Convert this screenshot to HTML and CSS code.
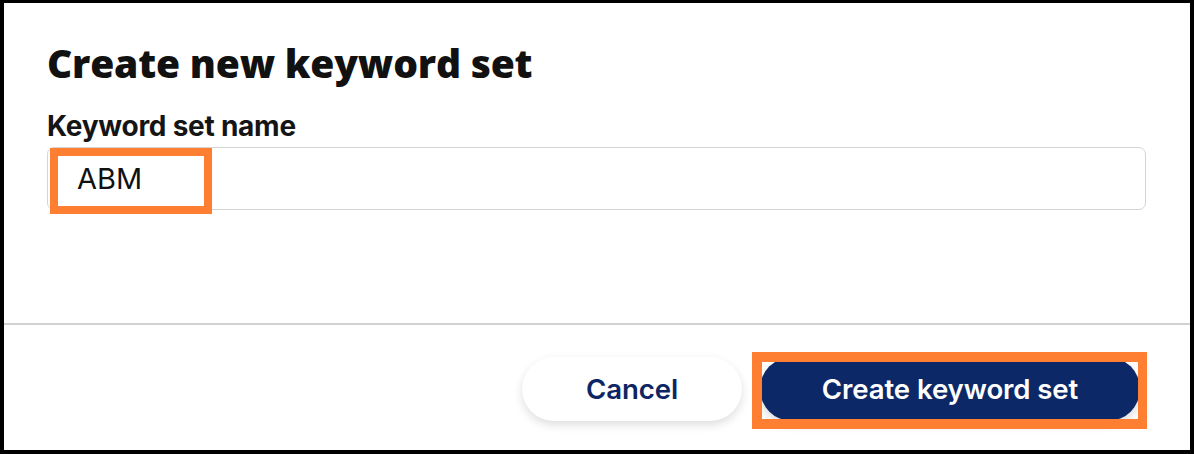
FILE: index.html
```html
<!DOCTYPE html>
<html lang="en">
<head>
<meta charset="UTF-8" />
<meta name="viewport" content="width=device-width, initial-scale=1" />
<title>Create new keyword set</title>
<link rel="stylesheet" href="styles.css">
</head>
<body>

  <div class="modal" role="dialog" aria-labelledby="modalTitle">
    <div class="modal-body">
      <h2 class="modal-title" id="modalTitle">Create new keyword set</h2>
      <label class="field-label" for="setName">Keyword set name</label>
      <div class="field">
        <input type="text" id="setName" class="field-input" value="ABM" />
        <!-- cadre orange d'annotation -->
        <span class="mark mark-input"></span>
      </div>
    </div>

    <div class="modal-footer">
      <button class="btn btn-secondary">Cancel</button>
      <div class="btn-wrap">
        <button class="btn btn-primary">Create keyword set</button>
        <span class="mark mark-btn"></span>
      </div>
    </div>
  </div>

</body>
</html>
```

FILE: styles.css
```css
* {
  box-sizing: border-box;
}

html, body {
  margin: 0;
  height: 100%;
  background: #fff;
}

.modal {
  height: 454px;
  border-style: solid;
  border-color: #000;
  border-width: 3px 4px 4px 4px;
  background: #fff;
  display: flex;
  flex-direction: column;
}

.modal-body {
  height: 320px;
  padding: 36px 44px 0 43px;
}

.modal-title {
  margin: 0;
  font-family: "Open Sans", sans-serif;
  font-weight: 800;
  font-size: 39px;
  line-height: 48px;
  letter-spacing: -0.2px;
  color: #111;
}

.field-label {
  display: block;
  margin-top: 23px;
  font-family: Inter, sans-serif;
  font-weight: 700;
  font-size: 28px;
  line-height: 32px;
  letter-spacing: -0.25px;
  color: #151515;
}

.field {
  position: relative;
  margin-top: 5px;
}

.field-input {
  display: block;
  width: 100%;
  height: 63px;
  padding: 0 29px;
  border: 1.5px solid #d4d4d4;
  border-radius: 7px;
  font-family: Inter, sans-serif;
  font-size: 29px;
  color: #111;
  outline: none;
}

.mark {
  position: absolute;
  border: 9px solid #ff7f32;
  pointer-events: none;
}

.mark-input {
  left: 3px;
  top: 1px;
  width: 162px;
  height: 66px;
  border-width: 8px;
}

.modal-footer {
  flex: 1;
  border-top: 2px solid #d2d2d2;
  display: flex;
  justify-content: flex-end;
  align-items: flex-start;
  gap: 18px;
  padding: 32px 50px 0 0;
}

.btn {
  border: none;
  border-radius: 32px;
  height: 64px;
  font-family: Inter, sans-serif;
  font-weight: 600;
  font-size: 27.6px;
  letter-spacing: -0.1px;
  cursor: pointer;
}

.btn-secondary {
  width: 220px;
  background: #fff;
  color: #0d2663;
  box-shadow: 0 4px 10px rgba(0, 0, 0, 0.13);
}

.btn-wrap {
  position: relative;
}

.btn-primary {
  width: 380px;
  background: #0d2866;
  color: #fff;
  box-shadow: 0 4px 10px rgba(0, 0, 0, 0.15);
}

.mark-btn {
  left: -8px;
  top: -5px;
  width: 395px;
  height: 77px;
  border-width: 10px 9px 10px 10px;
}
```
